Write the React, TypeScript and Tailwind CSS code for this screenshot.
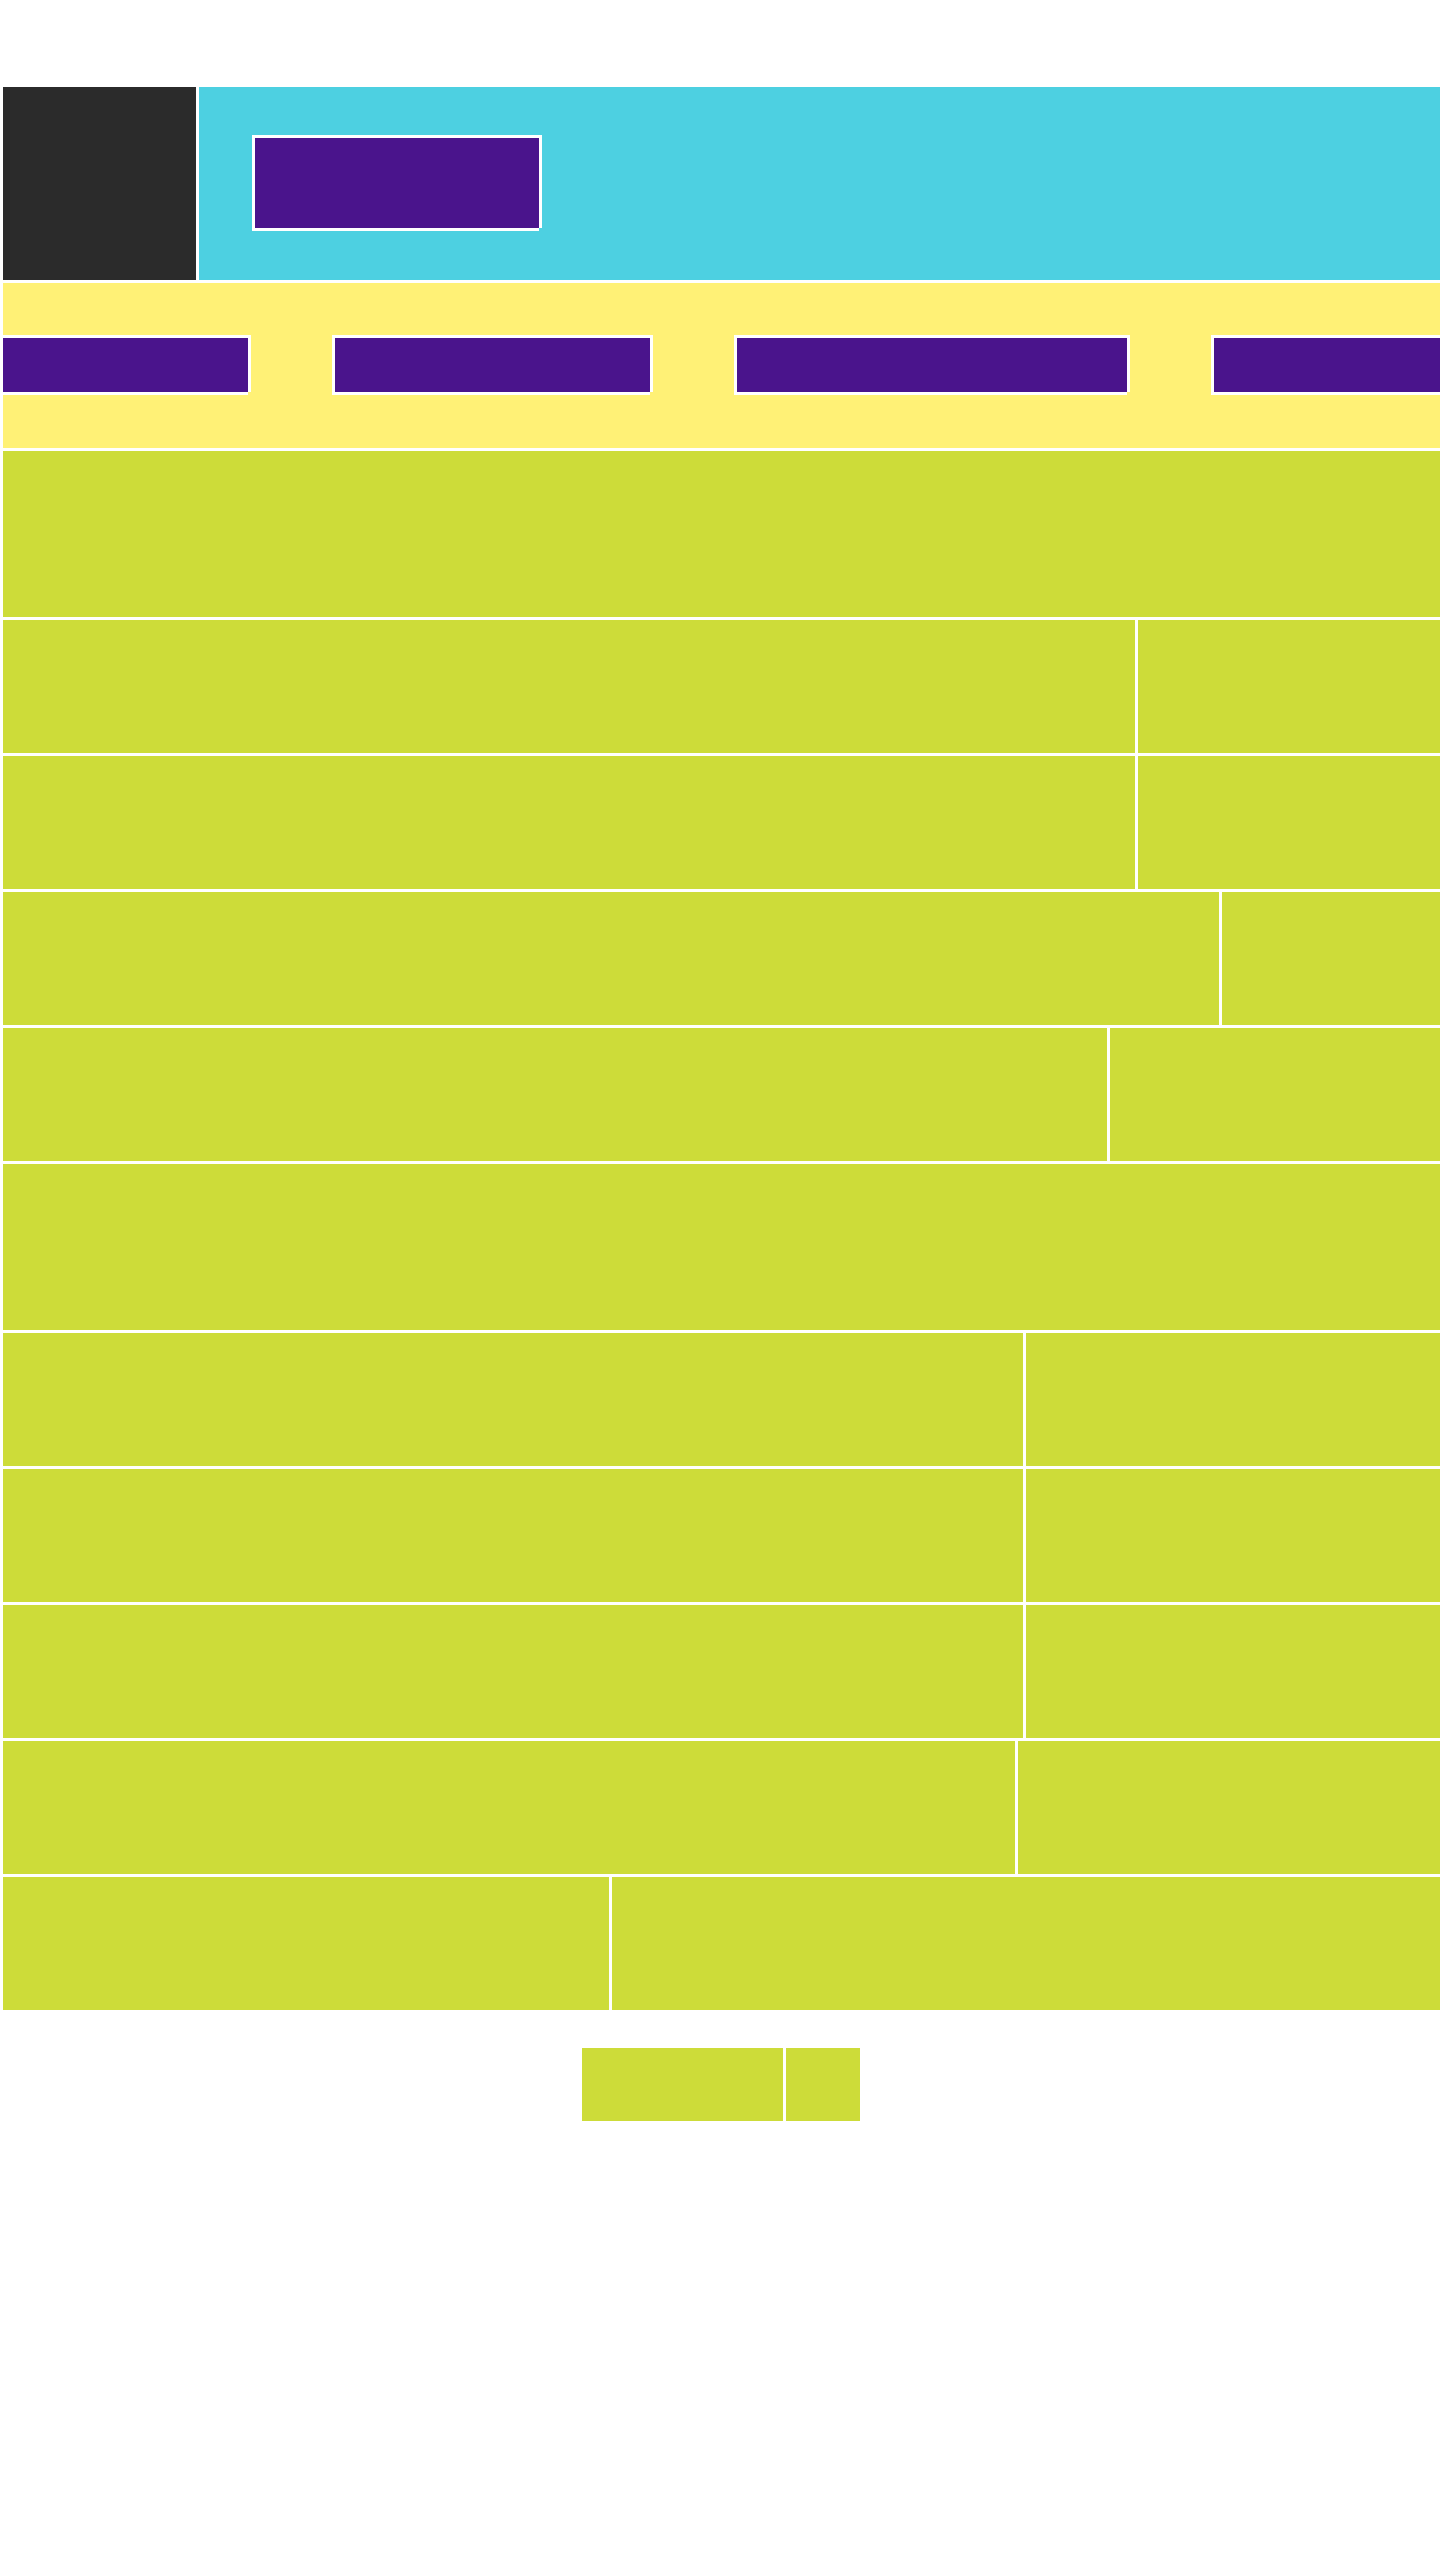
type Row = { id: string; detail?: string };

const edge =
  'shadow-[3px_0_#fff,3px_-3px_#fff,-3px_-3px_#fff,-3px_3px_#fff,0_3px_#fff]';

const tabs = [
  { id: 'first', width: 'w-[245px]' },
  { id: 'second', width: 'w-[315px]' },
  { id: 'third', width: 'w-[390px]' },
  { id: 'fourth', width: 'w-[315px]' },
];

const sections: Row[][] = [
  [
    { id: 'a1', detail: 'w-[302px]' },
    { id: 'a2', detail: 'w-[302px]' },
    { id: 'a3', detail: 'w-[218px]' },
    { id: 'a4', detail: 'w-[330px]' },
  ],
  [
    { id: 'b1', detail: 'w-[414px]' },
    { id: 'b2', detail: 'w-[414px]' },
    { id: 'b3', detail: 'w-[414px]' },
    { id: 'b4', detail: 'w-[422px]' },
    { id: 'b5', detail: 'w-[828px]' },
  ],
];

function Header() {
  return (
    <header className="flex h-[193px] gap-[3px]">
      <div className="w-[193px] shrink-0 bg-[#2b2b2b]" />
      <div className="flex flex-1 items-start bg-[#4dd0e1] px-14 pt-[51px]">
        <button
          type="button"
          aria-label="Home"
          className={`h-[90px] w-[284px] bg-[#4a148c] ${edge}`}
        />
      </div>
    </header>
  );
}

function Tabs() {
  return (
    <nav className="flex h-[165px] gap-[87px] overflow-hidden bg-[#fff176] pt-[55px]">
      {tabs.map((tab) => (
        <button
          key={tab.id}
          type="button"
          aria-label={`Open ${tab.id} tab`}
          className={`h-[54px] shrink-0 bg-[#4a148c] ${tab.width} ${edge}`}
        />
      ))}
    </nav>
  );
}

function Section({ rows }: { rows: Row[] }) {
  return (
    <section className="flex flex-col gap-[3px]">
      <div className="h-[166px] bg-[#cddc39]" />
      <ul className="flex flex-col gap-[3px]">
        {rows.map((row) => (
          <li key={row.id} className="flex h-[133px] gap-[3px]">
            <div className="flex-1 bg-[#cddc39]" />
            <div className={`bg-[#cddc39] ${row.detail}`} />
          </li>
        ))}
      </ul>
    </section>
  );
}

export default function App() {
  return (
    <div className="min-h-screen bg-white pt-[87px]">
      <div className="flex flex-col gap-[3px] pl-[3px]">
        <Header />
        <Tabs />
        <main className="flex flex-col gap-[3px]">
          {sections.map((rows) => (
            <Section key={rows[0].id} rows={rows} />
          ))}
        </main>
      </div>
      <footer className="flex justify-center gap-[3px] pt-[38px] pl-0.5">
        <div className="h-[73px] w-[201px] bg-[#cddc39]" />
        <div className="h-[73px] w-[74px] bg-[#cddc39]" />
      </footer>
    </div>
  );
}
